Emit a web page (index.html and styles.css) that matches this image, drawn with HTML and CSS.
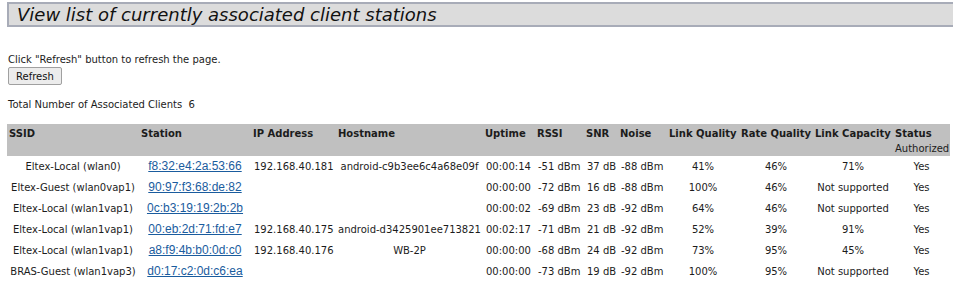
FILE: index.html
```html
<!DOCTYPE html>
<html>
<head>
<meta charset="utf-8">
<link rel="stylesheet" href="styles.css">
</head>
<body>
<div class="title">View list of currently associated client stations</div>
<p class="hint">Click "Refresh" button to refresh the page.</p>
<button class="btn">Refresh</button>
<p class="total">Total Number of Associated Clients&nbsp;&nbsp;6</p>
<table class="clients">
<colgroup>
<col class="c1"><col class="c2"><col class="c3"><col class="c4"><col class="c5"><col class="c6"><col class="c7"><col class="c8"><col class="c9"><col class="c10"><col class="c11"><col class="c12">
</colgroup>
<thead>
<tr><th>SSID</th><th>Station</th><th>IP Address</th><th>Hostname</th><th>Uptime</th><th>RSSI</th><th>SNR</th><th>Noise</th><th>Link Quality</th><th>Rate Quality</th><th>Link Capacity</th><th>Status<span class="sub">Authorized</span></th></tr>
</thead>
<tbody>
<tr><td class="ctr">Eltex-Local (wlan0)</td><td class="ctr"><a href="#">f8:32:e4:2a:53:66</a></td><td>192.168.40.181</td><td class="ctr">android-c9b3ee6c4a68e09f</td><td>00:00:14</td><td>-51 dBm</td><td>37 dB</td><td>-88 dBm</td><td class="ctr">41%</td><td class="ctr">46%</td><td class="ctr">71%</td><td class="ctr">Yes</td></tr>
<tr><td class="ctr">Eltex-Guest (wlan0vap1)</td><td class="ctr"><a href="#">90:97:f3:68:de:82</a></td><td></td><td></td><td>00:00:00</td><td>-72 dBm</td><td>16 dB</td><td>-88 dBm</td><td class="ctr">100%</td><td class="ctr">46%</td><td class="ctr">Not supported</td><td class="ctr">Yes</td></tr>
<tr><td class="ctr">Eltex-Local (wlan1vap1)</td><td class="ctr"><a href="#">0c:b3:19:19:2b:2b</a></td><td></td><td></td><td>00:00:02</td><td>-69 dBm</td><td>23 dB</td><td>-92 dBm</td><td class="ctr">64%</td><td class="ctr">46%</td><td class="ctr">Not supported</td><td class="ctr">Yes</td></tr>
<tr><td class="ctr">Eltex-Local (wlan1vap1)</td><td class="ctr"><a href="#">00:eb:2d:71:fd:e7</a></td><td>192.168.40.175</td><td class="ctr">android-d3425901ee713821</td><td>00:02:17</td><td>-71 dBm</td><td>21 dB</td><td>-92 dBm</td><td class="ctr">52%</td><td class="ctr">39%</td><td class="ctr">91%</td><td class="ctr">Yes</td></tr>
<tr><td class="ctr">Eltex-Local (wlan1vap1)</td><td class="ctr"><a href="#">a8:f9:4b:b0:0d:c0</a></td><td>192.168.40.176</td><td class="ctr">WB-2P</td><td>00:00:00</td><td>-68 dBm</td><td>24 dB</td><td>-92 dBm</td><td class="ctr">73%</td><td class="ctr">95%</td><td class="ctr">45%</td><td class="ctr">Yes</td></tr>
<tr><td class="ctr">BRAS-Guest (wlan1vap3)</td><td class="ctr"><a href="#">d0:17:c2:0d:c6:ea</a></td><td></td><td></td><td>00:00:00</td><td>-73 dBm</td><td>19 dB</td><td>-92 dBm</td><td class="ctr">100%</td><td class="ctr">95%</td><td class="ctr">Not supported</td><td class="ctr">Yes</td></tr>
</tbody>
</table>
</body>
</html>
```
FILE: styles.css
```css
html, body { background: #fff; }
body {
  margin: 0 1px 0 7px;
  padding-top: 2px;
  font-family: "DejaVu Sans", Verdana, sans-serif;
  font-size: 10px;
  color: #1c1c1c;
}
.title {
  background: #dcdcdc;
  border: 2px solid #a8acb8;
  border-right: none;
  height: 21px;
  padding-left: 8px;
  font-style: italic;
  font-size: 18px;
  line-height: 21px;
  color: #111;
}
.hint { margin: 26px 0 0 1px; line-height: 13px; }
.btn {
  margin: 1px 0 0 1px;
  font-family: "DejaVu Sans", Verdana, sans-serif;
  font-size: 10px;
  height: 18px;
  padding: 0 7px;
  background: #ececec;
  border: 1px solid #a0a0a0;
  border-radius: 2px;
  color: #111;
}
.total { margin: 13px 0 0 1px; line-height: 13px; }
.clients {
  margin-top: 13px;
  border-collapse: collapse;
  table-layout: fixed;
  width: 943px;
}
.c1 { width: 132px; } .c2 { width: 112px; } .c3 { width: 85px; } .c4 { width: 147px; }
.c5 { width: 52px; } .c6 { width: 49px; } .c7 { width: 34px; } .c8 { width: 49px; }
.c9 { width: 72px; } .c10 { width: 74px; } .c11 { width: 80px; } .c12 { width: 57px; }
.clients thead tr { background: #c0c0c0; }
.clients th {
  text-align: left;
  vertical-align: top;
  font-weight: bold;
  padding: 2px 0 0 2px;
  height: 32px;
  box-sizing: border-box;
  white-space: nowrap;
  line-height: 15px;
}
.sub { display: block; font-weight: normal; }
.clients td {
  height: 21px;
  padding: 0 0 0 3px;
  white-space: nowrap;
  line-height: 21px;
}
.clients td.ctr { text-align: center; padding: 0; }
.clients a { color: #1a5c9e; font-family: "Liberation Sans", Arial, sans-serif; font-size: 12px; }
```
